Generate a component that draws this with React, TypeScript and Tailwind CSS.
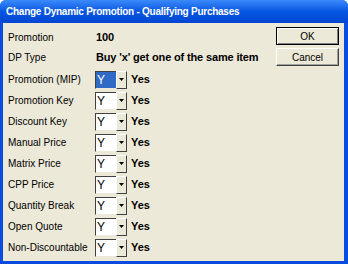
import React from 'react';

const rows = [
  'Promotion (MIP)',
  'Promotion Key',
  'Discount Key',
  'Manual Price',
  'Matrix Price',
  'CPP Price',
  'Quantity Break',
  'Open Quote',
  'Non-Discountable',
];

const Combo: React.FC<{ selected?: boolean }> = ({ selected }) => (
  <div className="flex h-[18px] items-stretch">
    <div className="flex w-[21px] border-t border-l border-t-[#404040] border-l-[#404040] border-b border-b-[#ece9d8] bg-white">
      <span
        className={`flex w-full items-center pl-[1px] text-[12px] leading-none ${
          selected ? 'bg-[#316ac5] text-white' : 'text-black'
        }`}
      >
        Y
      </span>
    </div>
    <div className="flex w-[11px] items-center justify-center border border-t-white border-l-white border-b-[#404040] border-r-[#404040] bg-[#ece9d8]">
      <svg width="5" height="3" viewBox="0 0 5 3">
        <path d="M0 0h5L2.5 3z" fill="#000" />
      </svg>
    </div>
  </div>
);

const Button: React.FC<{ label: string; primary?: boolean }> = ({ label, primary }) => (
  <button
    className={`flex h-[18px] w-[63px] items-center justify-center bg-[#ece9d8] text-[10px] text-black ${
      primary
        ? 'border border-black shadow-[inset_1px_1px_0_#fff,inset_-1px_-1px_0_#808080]'
        : 'border border-t-white border-l-white border-b-[#404040] border-r-[#404040] shadow-[inset_-1px_-1px_0_#a0a0a0]'
    }`}
  >
    {label}
  </button>
);

export default function App() {
  return (
    <div className="h-[264px] w-[348px] bg-white font-['Liberation_Sans',Arial,sans-serif]">
      <div className="flex h-full w-full flex-col rounded-t-[6px] bg-[#0a4be0]">
        <div className="flex h-[23px] items-center rounded-t-[6px] bg-gradient-to-b from-[#3b8afb] via-[#0656e2] to-[#0446d2] pl-[6px]">
          <span className="text-[10px] font-bold tracking-[-0.25px] text-white">
            Change Dynamic Promotion - Qualifying Purchases
          </span>
        </div>
        <div className="mb-[3px] ml-[3px] mr-[4px] flex flex-1 bg-[#ece9d8] pl-[5px] pt-[4px] text-[10px] text-black">
          <div className="flex flex-1 flex-col">
            <div className="flex h-[20px] items-center">
              <span className="w-[88px]">Promotion</span>
              <span className="text-[11px] font-bold tracking-[-0.15px]">100</span>
            </div>
            <div className="flex h-[20px] items-center">
              <span className="w-[88px]">DP Type</span>
              <span className="text-[11px] font-bold tracking-[-0.15px]">Buy 'x' get one of the same item</span>
            </div>
            <div className="mt-[2px] flex flex-col">
              {rows.map((label, i) => (
                <div key={label} className="flex h-[21px] items-center">
                  <span className="w-[87px] whitespace-nowrap">{label}</span>
                  <Combo selected={i === 0} />
                  <span className="ml-[4px] text-[11px] font-bold">Yes</span>
                </div>
              ))}
            </div>
          </div>
          <div className="flex flex-col gap-[3px] pr-[5px]">
            <Button label="OK" primary />
            <Button label="Cancel" />
          </div>
        </div>
      </div>
    </div>
  );
}
